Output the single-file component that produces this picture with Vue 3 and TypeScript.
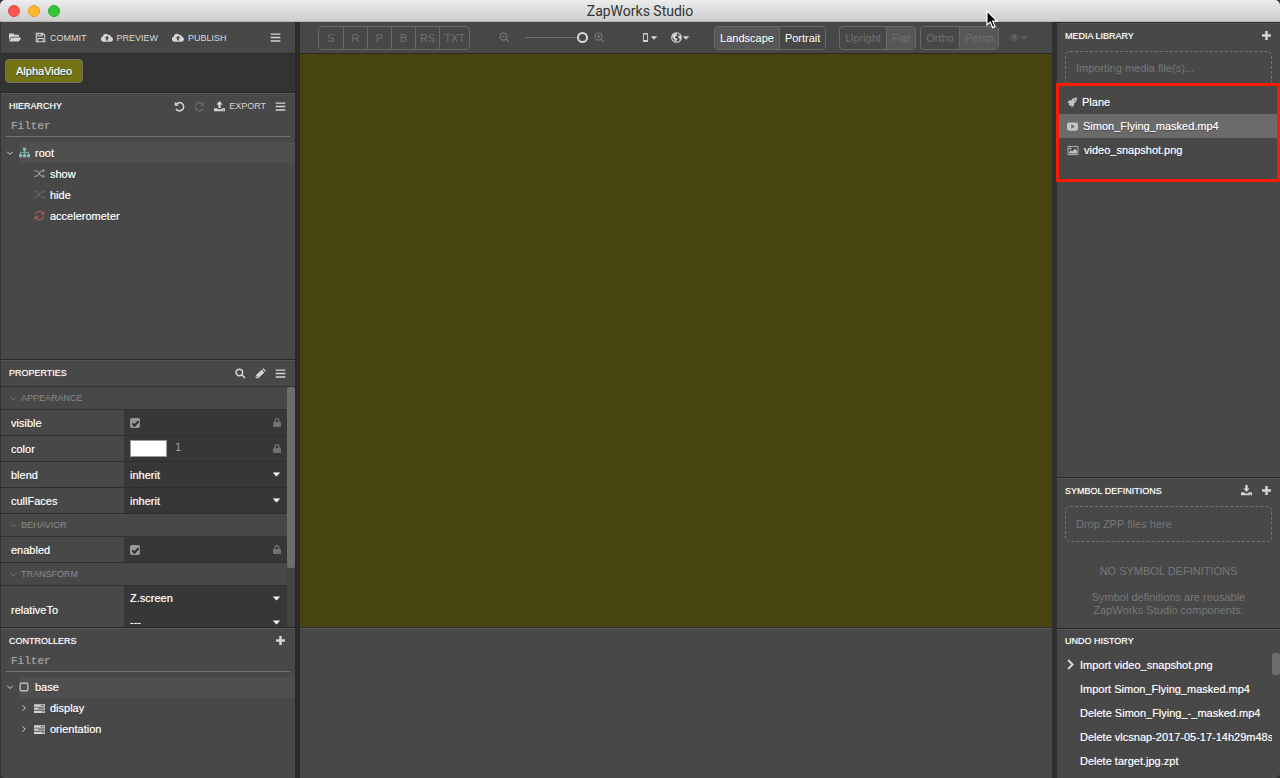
<script setup lang="ts">
import { h, ref, type FunctionalComponent } from 'vue'

interface Glyph { box?: string; fill?: string; line?: string; weight?: number }

const glyphs: Record<string, Glyph> = {
  folder: { box: '0 0 576 512', fill: 'M572.694 292.093L500.27 416.248A63.997 63.997 0 0 1 444.989 448H45.025c-18.523 0-30.064-20.093-20.731-36.093l72.424-124.155A64 64 0 0 1 152 256h399.964c18.523 0 30.064 20.093 20.73 36.093zM152 224h328v-48c0-26.51-21.49-48-48-48H272l-64-64H48C21.49 64 0 85.49 0 112v278.046l69.077-118.418C86.214 242.25 117.989 224 152 224z' },
  save: { line: 'M1.8 1.8H11.2L14.2 4.8V14.2H1.8ZM4.4 2V5.8H10.4V2M4.2 14V9.4H11.8V14', fill: 'M8 2H10V5H8Z', weight: 1.5 },
  cloud: { box: '0 0 20 16', fill: 'M16.6 6.7A3 3 0 0 0 12.8 4.2A5.4 5.4 0 0 0 2.8 6.6A4.3 4.3 0 0 0 4.3 15H15.8A4.2 4.2 0 0 0 16.6 6.7ZM10 5.2L13.8 9.2H11.4V12.8H8.6V9.2H6.2Z' },
  bars: { fill: 'M1 2H15V4H1ZM1 7H15V9H1ZM1 12H15V14H1Z' },
  undo: { line: 'M3.2 4.8A6 6 0 1 1 3 11.6', fill: 'M1 1V7H7Z', weight: 2.2 },
  redo: { line: 'M12.8 4.8A6 6 0 1 0 13 11.6', fill: 'M15 1V7H9Z', weight: 2.2 },
  upload: { fill: 'M8 0L12.6 5H9.7V10H6.3V5H3.4ZM0 10.5H5V12H11V10.5H16V15H0ZM11.5 12.8V13.8H12.5V12.8ZM13.4 12.8V13.8H14.4V12.8Z' },
  download: { fill: 'M8 10L12.6 5H9.7V0H6.3V5H3.4ZM0 10.5H4.5L6.5 12.5H9.5L11.5 10.5H16V15H0ZM11.5 12.8V13.8H12.5V12.8ZM13.4 12.8V13.8H14.4V12.8Z' },
  sitemap: { fill: 'M5.8 1H10.2V5H5.8ZM0 10.5H4.5V15H0ZM5.8 10.5H10.2V15H5.8ZM11.5 10.5H16V15H11.5Z', line: 'M8 4V11M2.2 11V7.8H13.8V11', weight: 1.2 },
  random: { line: 'M0 4H3C7 4 8 12 12 12H14M0 12H3C7 12 8 4 12 4H14', fill: 'M12.5 1L16 4L12.5 7ZM12.5 9L16 12L12.5 15Z', weight: 1.8 },
  refresh: { line: 'M2 6.6A6.2 6.2 0 0 1 13 4.5M14 9.4A6.2 6.2 0 0 1 3 11.5', fill: 'M15.2 1V7H9.2ZM.8 15V9H6.8Z', weight: 2.1 },
  search: { line: 'M11.2 6.5A4.8 4.8 0 1 1 1.6 6.5A4.8 4.8 0 1 1 11.2 6.5M10 10L14.6 14.6', weight: 2.2 },
  zoomout: { line: 'M11.8 6.6A5.1 5.1 0 1 1 1.6 6.6A5.1 5.1 0 1 1 11.8 6.6M10.3 10.3L14.8 14.8M4.2 6.6H9.2', weight: 1.7 },
  zoomin: { line: 'M11.8 6.6A5.1 5.1 0 1 1 1.6 6.6A5.1 5.1 0 1 1 11.8 6.6M10.3 10.3L14.8 14.8M4.2 6.6H9.2M6.7 4.1V9.1', weight: 1.7 },
  pencil: { fill: 'M1 11L9.6 2.4L13.6 6.4L5 15H1ZM10.6 1.4L12 0.2L15.8 4L14.6 5.4ZM2.4 11.8V13.6H4.2L4.8 13L3 11.2Z' },
  plus: { fill: 'M6.2 1.5H9.8V6.2H14.5V9.8H9.8V14.5H6.2V9.8H1.5V6.2H6.2Z' },
  down: { line: 'M2.5 5.5L8 11L13.5 5.5', weight: 2 },
  right: { line: 'M5 2.5L10.5 8L5 13.5', weight: 2 },
  chevron: { line: 'M4.5 1.5L11 8L4.5 14.5', weight: 3 },
  square: { line: 'M4 1.8H12A2.2 2.2 0 0 1 14.2 4V12A2.2 2.2 0 0 1 12 14.2H4A2.2 2.2 0 0 1 1.8 12V4A2.2 2.2 0 0 1 4 1.8Z', weight: 1.8 },
  tasks: { box: '0 0 18 16', fill: 'M0 1H18V5H0ZM0 6.3H18V10.2H0ZM0 11.5H18V15.5H0ZM11 2.4V3.6H16.6V2.4ZM7 7.6V8.8H16.6V7.6ZM13 12.9V14.1H16.6V12.9Z' },
  lock: { box: '0 0 448 512', fill: 'M400 224h-24v-72C376 68.2 307.8 0 224 0S72 68.2 72 152v72H48c-26.5 0-48 21.5-48 48v192c0 26.5 21.5 48 48 48h352c26.5 0 48-21.5 48-48V272c0-26.5-21.5-48-48-48zm-104 0H152v-72c0-39.7 32.3-72 72-72s72 32.3 72 72v72z' },
  caret: { fill: 'M1.5 4.5H14.5L8 11.5Z' },
  phone: { fill: 'M5 0H11A1.6 1.6 0 0 1 12.6 1.6V14.4A1.6 1.6 0 0 1 11 16H5A1.6 1.6 0 0 1 3.4 14.4V1.6A1.6 1.6 0 0 1 5 0ZM5 2.6V12.6H11V2.6Z' },
  globe: { line: 'M15 8A7 7 0 1 1 1 8A7 7 0 1 1 15 8', fill: 'M2 4L5 1.5L9 1.6L8 3.6L9.6 4.6L7 6.2L5.6 8L7.8 9.2L9.6 10.6L8 12.5L7 15L5 12L4.6 10L2 8ZM11 5L14.4 5L15 9L13.4 12L12 9.6L10.2 8Z', weight: 1.6 },
  eye: { line: 'M.8 8.2C4.5 2.6 11.5 2.6 15.2 8.2C11.5 13.6 4.5 13.6 .8 8.2Z', fill: 'M8 4A3.6 3.6 0 1 1 8 11.2A3.6 3.6 0 1 1 8 4Z', weight: 1.4 },
  rocket: { fill: 'M15.8 .2C11.8 0 9 1.4 6.6 4.6L3.2 4.8L.4 8.6L3.8 8.8L2.6 11L5 13.4L7.2 12.2L7.4 15.6L11.2 12.8L11.4 9.4C14.6 7 16 4.2 15.8 .2ZM12.2 2.8A1 1 0 1 1 12.2 4.8A1 1 0 1 1 12.2 2.8Z' },
  video: { fill: 'M3 2H13Q16 2 16 5V11Q16 14 13 14H3Q0 14 0 11V5Q0 2 3 2ZM6.2 4.8V11.2L11.4 8Z' },
  image: { box: '0 0 18 16', line: 'M1.6 1.8H16.4V14.2H1.6Z', fill: 'M3.4 12.5V10.2L6 7.6L7.8 9.4L11.8 5.2L14.8 8.4V12.5ZM5 3.6A1.5 1.5 0 1 1 5 6.6A1.5 1.5 0 1 1 5 3.6Z', weight: 1.3 },
}

const Icon: FunctionalComponent<{ name: string }> = (props) => {
  const g = glyphs[props.name]
  return h('svg', { class: ['icon', 'icon-' + props.name], viewBox: g.box ?? '0 0 16 16', 'aria-hidden': 'true' }, [
    g.fill ? h('path', { d: g.fill, fill: 'currentColor', 'fill-rule': 'evenodd' }) : null,
    g.line ? h('path', { d: g.line, fill: 'none', stroke: 'currentColor', 'stroke-width': g.weight }) : null,
  ])
}
Icon.props = ['name']

const filterTree = ref('')
const filterControllers = ref('')
const zoom = ref(100)
const actions = [
  { icon: 'save', label: 'COMMIT' },
  { icon: 'cloud', label: 'PREVIEW' },
  { icon: 'cloud', label: 'PUBLISH' },
]
const nodes = [
  { icon: 'random', label: 'show', tone: 'soft' },
  { icon: 'random', label: 'hide', tone: 'faint' },
  { icon: 'refresh', label: 'accelerometer', tone: 'red' },
]
const modes = ['S', 'R', 'P', 'B', 'RS', 'TXT']
const sections = [
  { title: 'APPEARANCE', rows: [
    { name: 'visible', kind: 'check' },
    { name: 'color', kind: 'color' },
    { name: 'blend', kind: 'select', values: ['inherit'] },
    { name: 'cullFaces', kind: 'select', values: ['inherit'] },
  ] },
  { title: 'BEHAVIOR', rows: [{ name: 'enabled', kind: 'check' }] },
  { title: 'TRANSFORM', rows: [{ name: 'relativeTo', kind: 'select', values: ['Z.screen', '---'] }] },
]
const media = [
  { icon: 'rocket', label: 'Plane' },
  { icon: 'video', label: 'Simon_Flying_masked.mp4' },
  { icon: 'image', label: 'video_snapshot.png' },
]
const selectedMedia = ref(1)
const history = [
  'Import video_snapshot.png',
  'Import Simon_Flying_masked.mp4',
  'Delete Simon_Flying_-_masked.mp4',
  'Delete vlcsnap-2017-05-17-14h29m48s',
  'Delete target.jpg.zpt',
]
</script>

<template>
  <div class="window">
    <header class="titlebar">
      <div class="lights">
        <button class="light close" aria-label="Close"></button>
        <button class="light minimise" aria-label="Minimise"></button>
        <button class="light expand" aria-label="Zoom"></button>
      </div>
      <h1>ZapWorks Studio</h1>
    </header>

    <div class="workspace">
      <aside class="left">
        <nav class="toolbar actions">
          <button aria-label="Open"><Icon name="folder" /></button>
          <button v-for="a in actions" :key="a.label"><Icon :name="a.icon" />{{ a.label }}</button>
          <button class="end" aria-label="Menu"><Icon name="bars" /></button>
        </nav>
        <div class="tabs"><button class="tab">AlphaVideo</button></div>

        <section class="panel hierarchy">
          <div class="head">
            <h2>HIERARCHY</h2>
            <button aria-label="Undo"><Icon name="undo" /></button>
            <button class="off" aria-label="Redo"><Icon name="redo" /></button>
            <button><Icon name="upload" />EXPORT</button>
            <button aria-label="Hierarchy menu"><Icon name="bars" /></button>
          </div>
          <input v-model="filterTree" class="filter" placeholder="Filter" aria-label="Filter hierarchy" />
          <ul class="tree">
            <li class="parent"><Icon name="down" /><span class="node lit"><Icon name="sitemap" class="teal" />root</span></li>
            <li v-for="n in nodes" :key="n.label" class="leaf"><Icon :name="n.icon" :class="n.tone" />{{ n.label }}</li>
          </ul>
        </section>

        <section class="panel properties">
          <div class="head">
            <h2>PROPERTIES</h2>
            <button aria-label="Search"><Icon name="search" /></button>
            <button aria-label="Edit"><Icon name="pencil" /></button>
            <button aria-label="Properties menu"><Icon name="bars" /></button>
          </div>
          <div class="scroller">
            <div class="fields">
              <template v-for="s in sections" :key="s.title">
                <h3><Icon name="down" />{{ s.title }}</h3>
                <div v-for="r in s.rows" :key="r.name" class="row">
                  <label :for="'f-' + r.name">{{ r.name }}</label>
                  <div class="value">
                    <template v-if="r.kind === 'check'">
                      <input :id="'f-' + r.name" type="checkbox" checked />
                      <Icon name="lock" />
                    </template>
                    <template v-else-if="r.kind === 'color'">
                      <input :id="'f-' + r.name" type="color" value="#ffffff" />
                      <span class="alpha">1</span>
                      <Icon name="lock" />
                    </template>
                    <div v-else class="choices">
                      <div v-for="(v, i) in r.values" :key="v" class="choice">
                        <select :id="i ? 'f-' + r.name + i : 'f-' + r.name" :aria-label="r.name"><option>{{ v }}</option></select>
                        <Icon name="caret" />
                      </div>
                    </div>
                  </div>
                </div>
              </template>
            </div>
            <div class="track"><div class="thumb"></div></div>
          </div>
        </section>

        <section class="panel controllers">
          <div class="head">
            <h2>CONTROLLERS</h2>
            <button aria-label="Add controller"><Icon name="plus" /></button>
          </div>
          <input v-model="filterControllers" class="filter" placeholder="Filter" aria-label="Filter controllers" />
          <ul class="tree">
            <li class="parent"><Icon name="down" /><span class="node lit"><Icon name="square" />base</span></li>
            <li v-for="c in ['display', 'orientation']" :key="c" class="branch"><Icon name="right" /><span class="node"><Icon name="tasks" />{{ c }}</span></li>
          </ul>
        </section>
      </aside>

      <main class="center">
        <nav class="toolbar view">
          <div class="group modes dim"><button v-for="m in modes" :key="m">{{ m }}</button></div>
          <div class="zoom">
            <Icon name="zoomout" />
            <input v-model="zoom" type="range" min="0" max="100" aria-label="Zoom" />
            <Icon name="zoomin" />
          </div>
          <div class="menus">
            <button aria-label="Device"><Icon name="phone" /><Icon name="caret" /></button>
            <button aria-label="World"><Icon name="globe" /><Icon name="caret" /></button>
          </div>
          <div class="group bright"><button class="on">Landscape</button><button>Portrait</button></div>
          <div class="pair">
            <div class="group dim"><button>Upright</button><button class="on">Flat</button></div>
            <div class="group dim"><button>Ortho</button><button class="on">Persp</button></div>
          </div>
          <button class="eye" aria-label="Visibility"><Icon name="eye" /><Icon name="caret" /></button>
        </nav>
        <div class="canvas"></div>
        <div class="timeline"></div>
      </main>

      <aside class="right">
        <section class="panel library">
          <div class="head">
            <h2>MEDIA LIBRARY</h2>
            <button aria-label="Add media"><Icon name="plus" /></button>
          </div>
          <div class="drop">Importing media file(s)...</div>
          <div class="media">
            <button v-for="(m, i) in media" :key="m.label" :class="{ selected: i === selectedMedia }" @click="selectedMedia = i">
              <Icon :name="m.icon" />{{ m.label }}
            </button>
            <div class="highlight"></div>
          </div>
        </section>

        <section class="panel symbols">
          <div class="head">
            <h2>SYMBOL DEFINITIONS</h2>
            <button aria-label="Import symbol"><Icon name="download" /></button>
            <button aria-label="Add symbol"><Icon name="plus" /></button>
          </div>
          <div class="drop">Drop ZPP files here</div>
          <div class="empty">
            <p>NO SYMBOL DEFINITIONS</p>
            <p>Symbol definitions are reusable<br />ZapWorks Studio components.</p>
          </div>
        </section>

        <section class="panel undo">
          <div class="head"><h2>UNDO HISTORY</h2></div>
          <div class="log">
            <ol>
              <li v-for="(item, i) in history" :key="item"><span class="mark"><Icon v-if="i === 0" name="chevron" /></span>{{ item }}</li>
            </ol>
            <div class="track"><div class="thumb"></div></div>
          </div>
        </section>
      </aside>
    </div>

    <svg class="pointer" viewBox="0 0 12 19" aria-hidden="true">
      <path d="M1 1V15L4.3 12L6.6 17.6L9 16.6L6.7 11.2H11Z" fill="#000" stroke="#fff" stroke-width="1.2" />
    </svg>
  </div>
</template>

<style>
body { margin: 0; background: #2b2b2b; }
</style>

<style scoped>
.window { --glow: 0 0 1px #aaa, 0 1px 1px #333; position: relative; display: flex; flex-direction: column; height: 100vh; overflow: hidden; border-radius: 5px; background: #2c2c2c; color: #fff; font: 11px/14px "Liberation Sans", Arial, sans-serif; box-sizing: border-box; }
.window *, .window *::before, .window *::after { box-sizing: border-box; }
button { display: flex; align-items: center; margin: 0; padding: 0; border: 0; background: none; color: inherit; font: inherit; white-space: nowrap; }
h1, h2, h3, p, ul, ol { margin: 0; padding: 0; list-style: none; font-weight: normal; }
.icon { flex: none; width: 11px; height: 11px; color: #d4d4d4; }

.titlebar { display: grid; grid-template-columns: 1fr auto 1fr; align-items: center; flex: none; height: 22px; background: linear-gradient(#ececec, #cecece); border-bottom: 1px solid #b4b4b4; }
.lights { display: flex; gap: 8px; padding-left: 8px; }
.light { width: 12px; height: 12px; border-radius: 50%; }
.close { background: #fc5650; border: 1px solid #e2443f; }
.minimise { background: #fdb92c; border: 1px solid #e0a023; }
.expand { background: #34c638; border: 1px solid #27a92c; }
h1 { color: #333; font: 14px/20px Roboto, Inter, sans-serif; }

.workspace { display: flex; flex: 1; min-height: 0; }
.left { display: flex; flex-direction: column; flex: none; width: 300px; padding-left: 1px; border-right: 5px double #292929; background: #333; text-shadow: var(--glow); }
.right { display: flex; flex-direction: column; flex: none; width: 228px; border-left: 5px solid #303030; text-shadow: var(--glow); }
.center { display: flex; flex-direction: column; flex: 1; min-width: 0; }

.toolbar { display: flex; align-items: center; flex: none; height: 32px; background: #484848; border-bottom: 1px solid #2a2a2a; }
.actions { padding: 0 14px 0 8px; font-size: 9px; color: #d8d8d8; text-shadow: 0 0 1px #888; }
.actions button { margin-right: 14px; gap: 4px; }
.actions .end { margin: 0 0 0 auto; }
.actions .icon-folder, .actions .icon-cloud { width: 12px; }
.tabs { flex: none; height: 38px; padding: 5px 4px; background: #333; }
.tab { height: 24px; padding: 0 10px; border: 1px solid #716f66; border-radius: 4px; background: #747313; text-shadow: var(--glow); }

.panel { display: flex; flex-direction: column; min-height: 0; background: #484848; border-top: 1px solid #2a2a2a; box-shadow: inset 0 1px #565656; }
.head { display: flex; align-items: center; flex: none; gap: 9px; height: 26px; padding: 0 9px 0 8px; font-size: 9px; color: #d4d4d4; text-shadow: 0 0 1px #888; }
.head h2 { margin-right: auto; font-size: 9px; line-height: 12px; color: #fff; text-shadow: 0 0 1px #bbb; }
.head button { gap: 4px; }
.off .icon { color: #666; }
.hierarchy { flex: 268 0 0; }
.properties { flex: 268 0 0; }
.controllers { flex: 151 0 0; }
.filter { flex: none; height: 18px; margin: 0 5px 5px; padding: 0 5px 3px; border: 0; border-bottom: 1px solid #747474; outline: 0; background: none; color: #ddd; font: 11px "Liberation Mono", monospace; text-shadow: 0 0 1px #888; }
.filter::placeholder { color: #a0a0a0; opacity: 1; }
.tree li { display: flex; align-items: center; height: 21px; }
.parent > .icon, .branch > .icon { width: 8px; height: 8px; }
.parent { padding-left: 5px; gap: 5px; }
.branch { padding-left: 19px; gap: 6px; }
.leaf { padding-left: 33px; gap: 5px; }
.node { display: flex; align-items: center; gap: 5px; height: 21px; }
.lit { flex: 1; background: #4f4f4f; }
.icon-square { width: 10px; height: 10px; margin-right: 1px; }
.teal { color: #83c4bf; }
.soft { color: #999; }
.faint { color: #636363; }
.red { color: #a15757; }

.scroller { display: flex; flex: 1; min-height: 0; overflow: hidden; border-top: 1px solid #333; }
.fields { flex: 1; }
.track { flex: none; width: 8px; background: #434343; }
.thumb { border-radius: 2px; background: #6d6d6d; }
.properties .thumb { height: 181px; }
h3 { display: flex; align-items: center; gap: 4px; height: 23px; padding-left: 9px; border-bottom: 1px solid #333; font-size: 9px; line-height: 12px; color: #8a8a8a; text-shadow: none; }
h3 .icon { width: 7px; height: 7px; color: #808080; }
.row { display: grid; grid-template-columns: 124px 1fr; min-height: 26px; border-bottom: 1px solid #2e2e2e; }
.row label { display: flex; align-items: center; padding-left: 10px; border-right: 1px solid #333; }
.value { display: flex; align-items: center; padding: 0 6px 0 5px; background: #373737; }
.value .icon-lock { width: 8px; height: 9px; margin-left: auto; color: #717171; }
.value input[type='checkbox'] { appearance: none; display: grid; place-items: center; width: 10px; height: 10px; margin: 0; border-radius: 2px; background: #979797; }
.value input[type='checkbox']::after { content: ''; width: 7px; height: 4px; border: solid #2f2f2f; border-width: 0 0 2px 2px; transform: rotate(-45deg); }
.value input[type='color'] { appearance: none; width: 37px; height: 17px; padding: 0; border: 1px solid #999; background: #fff; }
.value input[type='color']::-webkit-color-swatch-wrapper { padding: 0; }
.value input[type='color']::-webkit-color-swatch { border: 0; }
.alpha { padding: 0 0 2px 8px; color: #a0a0a0; font: 10px/12px "DejaVu Sans Mono", monospace; text-shadow: none; }
.choices { flex: 1; }
.choice { display: flex; align-items: center; height: 24px; }
.choice select { flex: 1; appearance: none; height: 22px; margin: 0; padding: 0; border: 0; outline: 0; background: none; color: #fff; font: inherit; text-shadow: inherit; }
.choice .icon { width: 9px; height: 9px; color: #fff; }

.view { padding-left: 18px; background: #474747; }
.group { display: flex; height: 24px; border: 1px solid #696969; border-radius: 4px; overflow: hidden; }
.group button { justify-content: center; padding: 0 5px; }
.group button + button { border-left: 1px solid #696969; }
.modes button { min-width: 24px; padding: 0 4px; }
.dim { color: #707070; text-shadow: 0 0 1px #555; }
.group .on { background: #575757; }
.bright { color: #fff; text-shadow: var(--glow); }
.zoom { display: flex; align-items: center; margin-left: 29px; }
.zoom .icon { color: #777; }
.zoom input { appearance: none; width: 63px; height: 12px; margin: 0 6px 0 15px; background: linear-gradient(#707070, #707070) center / 100% 1px no-repeat; }
.zoom input::-webkit-slider-thumb { appearance: none; width: 11px; height: 11px; border: 2px solid #d8d8d8; border-radius: 50%; background: #474747; }
.menus { display: flex; gap: 13px; margin: 0 24px 0 36px; }
.menus .icon-phone { width: 9px; height: 9px; }
.icon-caret { width: 8px; height: 8px; }
.pair { display: flex; gap: 4px; margin: 0 10px 0 13px; }
.eye .icon { color: #626262; }
.canvas { flex: 574 0 0; background: #474410; }
.timeline { flex: 150 0 0; background: #484848; border-top: 1px solid #333; box-shadow: inset 0 1px #565656; }

.library { flex: 456 0 0; }
.symbols { flex: 150 0 0; }
.undo { flex: 150 0 0; }
.right .head { height: 28px; padding: 0 8px 3px; }
.drop { flex: none; height: 36px; margin: 0 8px; padding: 10px; border: 1px dashed #737373; border-radius: 5px; color: #777; text-shadow: none; }
.library .drop { height: 35px; padding-top: 9px; }
.media { position: relative; padding: 4px 3px 20px 2px; }
.media button { width: 100%; height: 24px; gap: 5px; padding-left: 8px; text-shadow: inherit; }
.media .icon { color: #c4c4c4; }
.media .icon-rocket { width: 10px; }
.media .icon-image { width: 12px; }
.media .selected { background: #6b6b6b; }
.highlight { position: absolute; inset: -3px 0 0 -1px; border: 3px solid #f91b04; pointer-events: none; }
.empty { padding: 23px 0 0; text-align: center; line-height: 13px; color: #777; text-shadow: none; }
.empty p + p { margin-top: 13px; }
.log { display: flex; flex: 1; min-height: 0; overflow: hidden; }
.log ol { flex: 1; min-width: 0; overflow: hidden; }
.log li { display: flex; align-items: center; height: 24px; white-space: nowrap; }
.undo .head { height: 24px; padding-bottom: 0; }
.mark { display: flex; flex: none; width: 23px; padding-left: 8px; }
.undo .thumb { height: 22px; }
.undo .track { background: none; }

.pointer { position: absolute; left: 986px; top: 10px; width: 12px; height: 19px; }
</style>
